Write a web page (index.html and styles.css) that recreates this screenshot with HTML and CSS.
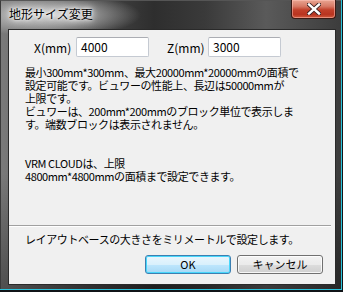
FILE: index.html
```html
<!DOCTYPE html>
<html lang="ja">
<head>
<meta charset="utf-8">
<link rel="stylesheet" href="styles.css">
</head>
<body>
<div class="window">
  <div class="frame">
    <div class="titlebar">
      <span class="title">地形サイズ変更</span>
      <div class="close">
        <svg width="14" height="12" viewBox="0 0 14 12">
          <path d="M2 1.5 L12 10.5 M12 1.5 L2 10.5" stroke="#3a2020" stroke-width="4.2" stroke-linecap="square" fill="none"/>
          <path d="M2 1.5 L12 10.5 M12 1.5 L2 10.5" stroke="#ffffff" stroke-width="2.4" stroke-linecap="square" fill="none"/>
        </svg>
      </div>
    </div>
    <div class="client">
      <div class="fields">
        <span class="label">X(mm)</span>
        <div class="edit">4000</div>
        <span class="label label-z">Z(mm)</span>
        <div class="edit">3000</div>
      </div>
      <p class="info">最小300mm*300mm、最大20000mm*20000mmの面積で<br>設定可能です。ビュワーの性能上、長辺は50000mmが<br>上限です。<br>ビュワーは、200mm*200mmのブロック単位で表示しま<br>す。端数ブロックは表示されません。</p>
      <p class="info vrm">VRM CLOUDは、上限<br>4800mm*4800mmの面積まで設定できます。</p>
      <div class="footer">
        <div class="separator"></div>
        <p class="hint">レイアウトベースの大きさをミリメートルで設定します。</p>
        <div class="buttons">
          <div class="btn btn-default">OK</div>
          <div class="btn">キャンセル</div>
        </div>
      </div>
    </div>
  </div>
</div>
</body>
</html>
```
FILE: styles.css
```css
html, body {
  margin: 0;
  padding: 0;
  background: #101418;
}
body {
  width: 343px;
  height: 292px;
  overflow: hidden;
  font-family: "Noto Sans CJK JP", sans-serif;
  font-size: 11px;
  color: #000;
}
.window {
  width: 342px;
  height: 290px;
  box-sizing: border-box;
  border-right: 1px solid #2bc4dc;
  border-bottom: 1px solid #2bc4dc;
  background: #222;
}
.frame {
  height: 100%;
  box-sizing: border-box;
  padding: 0 5px 4px 7px;
  display: flex;
  flex-direction: column;
  background:
    radial-gradient(ellipse 90px 22px at 50px 14px, rgba(235,235,235,0.85), rgba(235,235,235,0) 100%),
    linear-gradient(180deg, rgba(0,0,0,0) 60%, rgba(0,0,0,0.35) 100%),
    linear-gradient(90deg, #7a7a7a 0%, #4a4a4a 25%, #2e2e2e 45%, #3a3a3a 60%, #5a5a5a 78%, #3c3c3c 100%);
  border-left: 1px solid #3a3a3a;
  border-top: 1px solid #555;
}
.titlebar {
  height: 28px;
  flex: none;
  display: flex;
  align-items: flex-start;
  justify-content: space-between;
}
.title {
  margin-top: 5px;
  margin-left: 1px;
  font-size: 12px;
  line-height: 15px;
  color: #000;
  text-shadow: 0 0 6px #fff, 0 0 10px #fff, 0 0 3px #fff;
}
.close {
  width: 43px;
  height: 18px;
  margin-top: -1px;
  border: 1px solid #3a1a14;
  border-top: none;
  border-radius: 0 0 4px 4px;
  background: linear-gradient(180deg, #e9a592 0%, #d77a66 35%, #c2402a 55%, #b93420 80%, #d05a3c 100%);
  box-shadow: inset 0 0 0 1px rgba(255,200,190,0.5);
  display: flex;
  align-items: center;
  justify-content: center;
}
.client {
  flex: 1;
  background: #f0f0f0;
  border: 1px solid #2a2a2a;
  display: flex;
  flex-direction: column;
  padding: 0 12px 10px 16px;
}
.fields {
  display: flex;
  align-items: center;
  margin-top: 7px;
  font-size: 12px;
}
.label {
  margin-left: 9px;
  width: 42px;
}
.label-z {
  margin-left: 18px;
  width: 41px;
}
.edit {
  width: 67px;
  height: 18px;
  line-height: 17px;
  padding-left: 4px;
  box-sizing: content-box;
  background: #fff;
  border: 1px solid #c5cad2;
  border-top-color: #abadb3;
  border-radius: 2px;
}
.info {
  margin: 9px 0 0 0;
  line-height: 13px;
  letter-spacing: -0.4px;
  white-space: nowrap;
}
.info.vrm {
  margin-top: 26px;
}
.footer {
  margin-top: auto;
  margin-left: -16px;
  margin-right: -12px;
}
.separator {
  height: 1px;
  background: #a0a0a0;
  border-bottom: 1px solid #fff;
  margin-right: 4px;
}
.hint {
  margin: 6px 0 0 16px;
  line-height: 13px;
  letter-spacing: -0.4px;
  white-space: nowrap;
}
.buttons {
  display: flex;
  justify-content: flex-end;
  gap: 6px;
  margin: 9px 12px 0 0;
}
.btn {
  width: 84px;
  height: 17px;
  line-height: 17px;
  text-align: center;
  border: 1px solid #707070;
  border-radius: 3px;
  background: linear-gradient(180deg, #f2f2f2 0%, #ebebeb 50%, #dddddd 51%, #cfcfcf 100%);
  box-shadow: inset 0 0 0 1px rgba(255,255,255,0.8);
}
.btn-default {
  border-color: #3c7fb1;
  background: linear-gradient(180deg, #eaf6fd 0%, #d9f0fc 50%, #bee6fd 51%, #a7d9f5 100%);
  box-shadow: inset 0 0 0 1px #48d7fb;
}
```
